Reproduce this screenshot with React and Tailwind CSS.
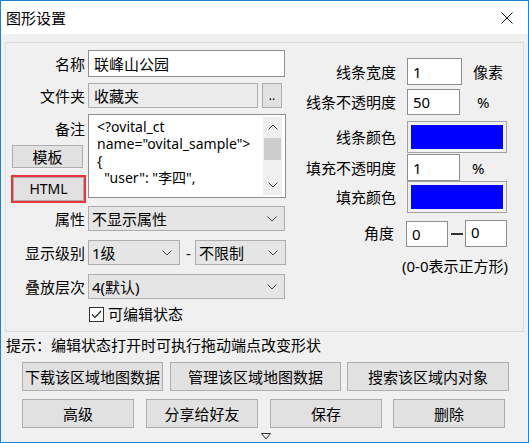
import React from "react";

const font = "font-['Noto_Sans','Noto_Sans_CJK_SC',sans-serif]";

function Chevron({ up }) {
  return (
    <svg width="10" height="6" viewBox="0 0 10 6" className="shrink-0">
      <path
        d={up ? "M0.5 5.5 L5 1 L9.5 5.5" : "M0.5 0.5 L5 5 L9.5 0.5"}
        fill="none"
        stroke="#444"
        strokeWidth="1"
      />
    </svg>
  );
}

function Select({ value, className = "" }) {
  return (
    <div
      className={`flex items-center justify-between border border-[#adadad] bg-[#e5e5e5] pl-[3px] pr-[7px] ${className}`}
    >
      <span>{value}</span>
      <Chevron />
    </div>
  );
}

function Input({ value, className = "" }) {
  return (
    <div className={`flex items-center border border-[#8f8f8f] bg-white pl-[5px] ${className}`}>
      {value}
    </div>
  );
}

function Btn({ children, className = "" }) {
  return (
    <div
      className={`flex items-center justify-center border border-[#adadad] bg-[#e1e1e1] ${className}`}
    >
      {children}
    </div>
  );
}

function ColorBox() {
  return (
    <div className="h-full w-[100px] border border-[#a0a0a0] p-[3px]">
      <div className="h-full w-full bg-[#0000ff]" />
    </div>
  );
}

function LeftRow({ label, children, className = "" }) {
  return (
    <div className={`flex items-center ${className}`}>
      <div className="w-[79px] text-right">{label}</div>
      <div className="ml-[3px] flex h-full items-center">{children}</div>
    </div>
  );
}

function RightRow({ label, children, className = "" }) {
  return (
    <div className={`flex items-center ${className}`}>
      <div className="w-[106px] text-right">{label}</div>
      <div className="ml-[11px] flex h-full items-center">{children}</div>
    </div>
  );
}

export default function App() {
  return (
    <div
      className={`${font} flex h-[443px] w-[529px] flex-col border border-[#1883d7] bg-[#f0f0f0] text-[15px] leading-[20px] text-black`}
    >
      {/* title bar */}
      <div className="flex h-[33px] items-center justify-between bg-white pl-[5px] pr-[15px]">
        <span className="text-[15px]">图形设置</span>
        <svg width="12" height="12" viewBox="0 0 12 12">
          <path d="M0.5 0.5 L11.5 11.5 M11.5 0.5 L0.5 11.5" stroke="#111" strokeWidth="1" />
        </svg>
      </div>

      {/* group box */}
      <div className="mx-[4px] mt-[8px] flex h-[290px] border border-[#dcdcdc]">
        <div className="flex w-[284px] flex-col">
          <LeftRow label="名称" className="mt-[7px] h-[27px]">
            <Input value="联峰山公园" className="h-[27px] w-[197px]" />
          </LeftRow>
          <LeftRow label="文件夹" className="mt-[6px] h-[25px]">
            <div className="flex h-[25px] w-[170px] items-center border border-[#adadad] bg-[#ececec] pl-[5px]">
              收藏夹
            </div>
            <Btn className="ml-[4px] h-[25px] w-[20px] text-[12px] leading-none">..</Btn>
          </LeftRow>

          <div className="mt-[6px] flex h-[89px]">
            <div className="flex w-[82px] flex-col">
              <div className="mt-[5px] pr-[3px] text-right">备注</div>
              <Btn className="ml-[6px] mt-[6px] h-[23px] w-[71px]">模板</Btn>
              <div className="ml-[5px] mt-[7px] h-[28px] w-[75px] border-2 border-[#e8343a]">
                <Btn className="h-full w-full text-[14px]">HTML</Btn>
              </div>
            </div>
            <div className="flex h-[84px] w-[198px] border border-[#8f8f8f] bg-white">
              <div className="flex-1 overflow-hidden whitespace-pre pl-[8px] pt-[3px] text-[14px] leading-[17px]">
                {'<?ovital_ct\nname="ovital_sample">\n{\n  "user": "李四",'}
              </div>
              <div className="my-[2px] mr-[3px] flex w-[19px] flex-col items-center bg-[#f0f0f0]">
                <div className="flex h-[20px] items-center">
                  <Chevron up />
                </div>
                <div className="mt-[1px] h-[22px] w-[17px] bg-[#cdcdcd]" />
                <div className="flex-1" />
                <div className="flex h-[20px] items-center">
                  <Chevron />
                </div>
              </div>
            </div>
          </div>

          <LeftRow label="属性" className="mt-[3px] h-[25px]">
            <Select value="不显示属性" className="h-[25px] w-[197px]" />
          </LeftRow>
          <LeftRow label="显示级别" className="mt-[9px] h-[25px]">
            <Select value="1级" className="h-[25px] w-[92px]" />
            <span className="ml-[6px] w-[8px]">-</span>
            <Select value="不限制" className="ml-[1px] h-[25px] w-[91px]" />
          </LeftRow>
          <LeftRow label="叠放层次" className="mt-[9px] h-[25px]">
            <Select value="4(默认)" className="h-[25px] w-[197px]" />
          </LeftRow>
          <div className="ml-[83px] mt-[7px] flex h-[16px] items-center">
            <div className="flex h-[15px] w-[15px] items-center justify-center border border-[#333] bg-white">
              <svg width="11" height="9" viewBox="0 0 11 9">
                <path d="M1 4.5 L4 7.5 L10 1" fill="none" stroke="#222" strokeWidth="1.2" />
              </svg>
            </div>
            <span className="ml-[4px]">可编辑状态</span>
          </div>
        </div>

        <div className="flex flex-1 flex-col">
          <RightRow label="线条宽度" className="mt-[15px] h-[27px]">
            <Input value="1" className="h-[27px] w-[55px]" />
            <span className="ml-[11px]">像素</span>
          </RightRow>
          <RightRow label="线条不透明度" className="mt-[4px] h-[26px]">
            <Input value="50" className="h-[26px] w-[53px]" />
            <span className="ml-[17px]">%</span>
          </RightRow>
          <RightRow label="线条颜色" className="mt-[6px] h-[32px]">
            <ColorBox />
          </RightRow>
          <RightRow label="填充不透明度" className="mt-[1px] h-[27px]">
            <Input value="1" className="h-[27px] w-[53px]" />
            <span className="ml-[12px]">%</span>
          </RightRow>
          <RightRow label="填充颜色" className="h-[32px]">
            <ColorBox />
          </RightRow>
          <div className="mt-[6px] flex h-[28px] items-center">
            <div className="w-[104px] text-right">角度</div>
            <Input value="0" className="ml-[12px] mt-[2px] h-[26px] w-[42px]" />
            <div className="ml-[3px] mt-[1px] h-[2px] w-[12px] bg-[#333]" />
            <div className="ml-[2px] flex h-[27px] w-[42px] items-start border border-[#8f8f8f] bg-white pl-[5px] pt-[1px]">
              0
            </div>
          </div>
          <div className="mt-[9px] pr-[15px] text-right">(0-0表示正方形)</div>
        </div>
      </div>

      {/* hint */}
      <div className="ml-[5px] mt-[3px]">提示：编辑状态打开时可执行拖动端点改变形状</div>

      <div className="ml-[21px] mt-[7px] flex h-[29px]">
        <Btn className="h-full w-[141px]">下载该区域地图数据</Btn>
        <Btn className="ml-[7px] h-full w-[171px]">管理该区域地图数据</Btn>
        <Btn className="ml-[6px] h-full w-[162px]">搜索该区域内对象</Btn>
      </div>
      <div className="ml-[21px] mt-[8px] flex h-[29px]">
        <Btn className="h-full w-[112px]">高级</Btn>
        <Btn className="ml-[12px] h-full w-[112px]">分享给好友</Btn>
        <Btn className="ml-[12px] h-full w-[112px]">保存</Btn>
        <Btn className="ml-[11px] h-full w-[112px]">删除</Btn>
      </div>
      <div className="mt-[5px] flex justify-center pl-[2px]">
        <svg width="10" height="7" viewBox="0 0 10 7">
          <path d="M0.5 0.5 L9.5 0.5 L5 6 Z" fill="none" stroke="#333" strokeWidth="1" />
        </svg>
      </div>
    </div>
  );
}
